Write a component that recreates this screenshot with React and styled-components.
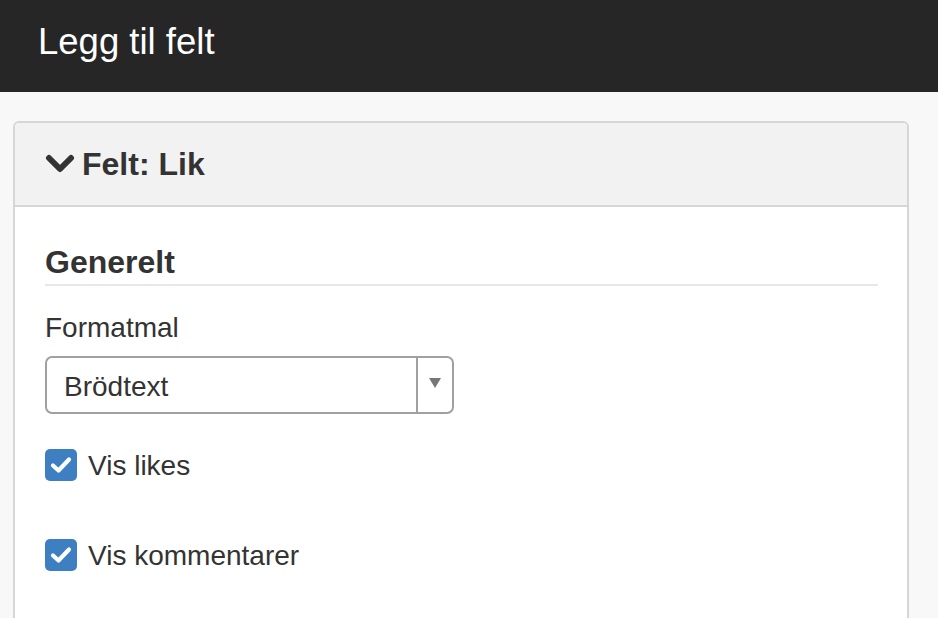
import React from "react";
import styled, { createGlobalStyle } from "styled-components";

const Global = createGlobalStyle`
  html, body { margin: 0; padding: 0; background: #f8f8f8; }
  body { font-family: "Liberation Sans", Arial, sans-serif; color: #333; }
`;

const Page = styled.div`
  min-height: 618px;
  background: #f8f8f8;
`;

const TopBar = styled.header`
  height: 92px;
  background: #262626;
  display: flex;
  align-items: center;
  padding: 0 38px;
  box-sizing: border-box;
`;

const Title = styled.h1`
  margin: 0;
  font-size: 36.5px;
  font-weight: normal;
  color: #fff;
  line-height: 1;
  transform: translateY(-4px);
`;

const Content = styled.main`
  padding: 29px 29px 0 13px;
`;

const Panel = styled.section`
  border: 2px solid #d6d6d6;
  border-radius: 6px;
  background: #fff;
  overflow: hidden;
`;

const PanelHeader = styled.div`
  height: 84px;
  background: #f2f2f2;
  border-bottom: 2px solid #d6d6d6;
  display: flex;
  align-items: center;
  padding: 0 30px;
  gap: 7px;
  box-sizing: border-box;
`;

const PanelTitle = styled.h2`
  margin: 0;
  font-size: 32px;
  font-weight: bold;
  color: #333;
  line-height: 1;
`;

const PanelBody = styled.div`
  padding: 39px 29px 60px 30px;
`;

const SectionTitle = styled.h3`
  margin: 0;
  font-size: 32px;
  font-weight: bold;
  color: #333;
  line-height: 1;
  padding-bottom: 6px;
  border-bottom: 2px solid #e8e8e8;
`;

const Label = styled.div`
  margin-top: 26px;
  font-size: 28px;
  line-height: 32px;
  color: #333;
`;

const Select = styled.div`
  margin-top: 12px;
  width: 409px;
  height: 58px;
  border: 2px solid #a0a0a0;
  border-radius: 7px;
  box-sizing: border-box;
  display: flex;
  align-items: stretch;
`;

const SelectValue = styled.div`
  flex: 1;
  display: flex;
  align-items: center;
  padding: 4px 0 0 17px;
  font-size: 28px;
  color: #333;
  border-right: 2px solid #a0a0a0;
`;

const SelectArrow = styled.div`
  width: 34px;
  display: flex;
  justify-content: center;
  align-items: center;
  padding-bottom: 4px;
  box-sizing: border-box;
`;

const CheckRow = styled.label`
  display: flex;
  align-items: center;
  gap: 11px;
  margin-top: ${(p) => p.$top}px;
  font-size: 28px;
  color: #333;
`;

const CheckText = styled.span`
  padding-top: 3px;
`;

const Box = styled.span`
  width: 32px;
  height: 32px;
  border-radius: 5px;
  background: #3d7fc1;
  display: flex;
  align-items: center;
  justify-content: center;
  flex: none;
`;

const Chevron = () => (
  <svg width="30" height="20" viewBox="0 0 30 20">
    <path d="M4 4 L15 15 L26 4" fill="none" stroke="#333" strokeWidth="6" strokeLinecap="round" strokeLinejoin="round" />
  </svg>
);

const Check = () => (
  <svg width="22" height="18" viewBox="0 0 22 18">
    <path d="M3 9.5 L8.5 14.5 L19 3.5" fill="none" stroke="#fff" strokeWidth="4.2" strokeLinecap="round" strokeLinejoin="round" />
  </svg>
);

const Triangle = () => (
  <svg width="12" height="10" viewBox="0 0 12 10">
    <path d="M0 0 H12 L6 10 Z" fill="#777" />
  </svg>
);

const Checkbox = ({ top, children }) => (
  <CheckRow $top={top}>
    <Box>
      <Check />
    </Box>
    <CheckText>{children}</CheckText>
  </CheckRow>
);

export default function App() {
  return (
    <Page>
      <Global />
      <TopBar>
        <Title>Legg til felt</Title>
      </TopBar>
      <Content>
        <Panel>
          <PanelHeader>
            <Chevron />
            <PanelTitle>Felt: Lik</PanelTitle>
          </PanelHeader>
          <PanelBody>
            <SectionTitle>Generelt</SectionTitle>
            <Label>Formatmal</Label>
            <Select>
              <SelectValue>Brödtext</SelectValue>
              <SelectArrow>
                <Triangle />
              </SelectArrow>
            </Select>
            <Checkbox top={33}>Vis likes</Checkbox>
            <Checkbox top={55}>Vis kommentarer</Checkbox>
          </PanelBody>
        </Panel>
      </Content>
    </Page>
  );
}
